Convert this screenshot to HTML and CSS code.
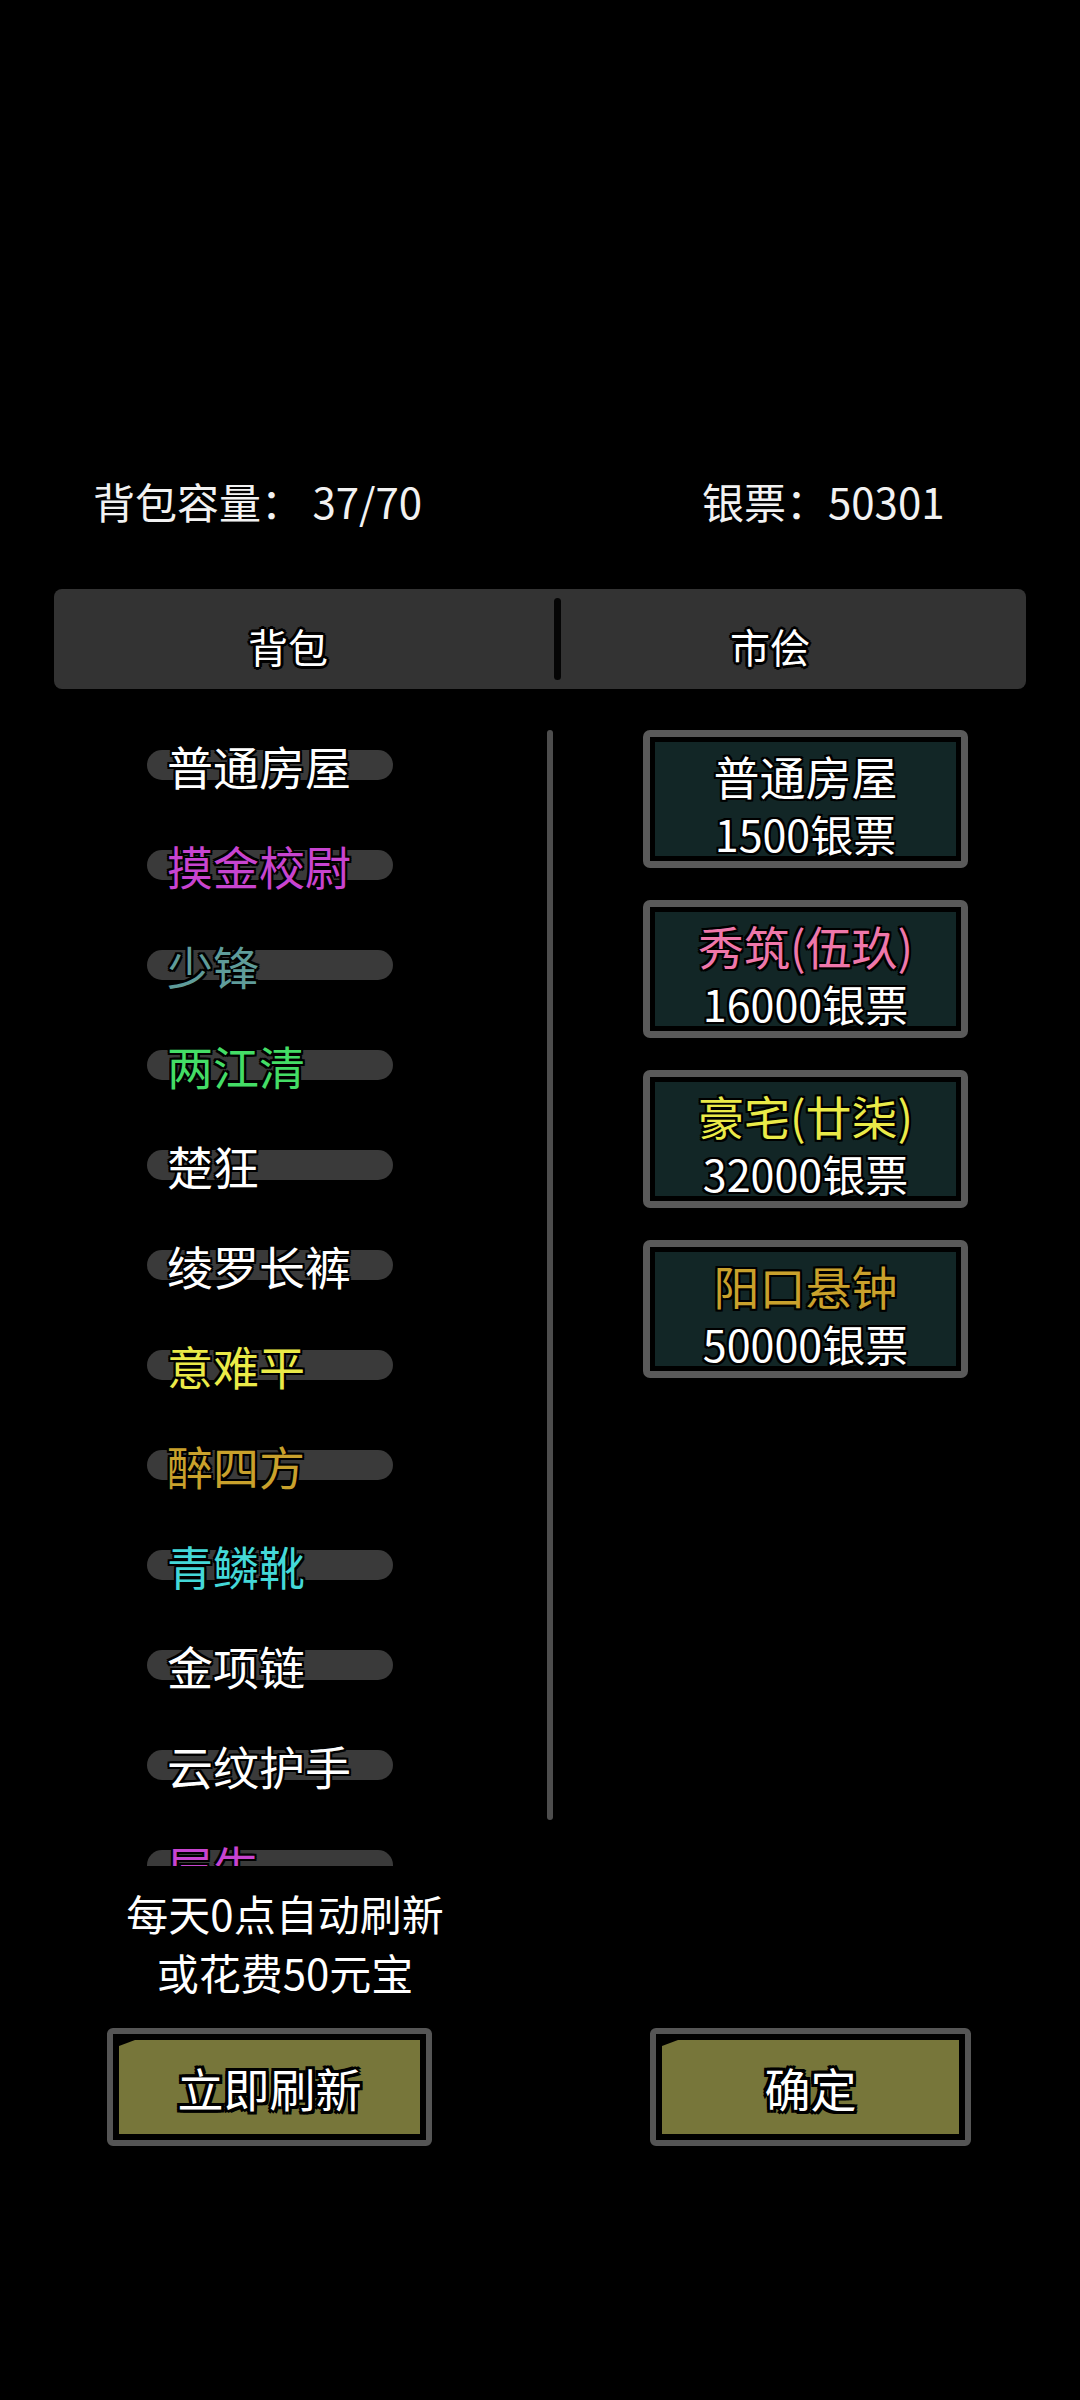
FILE: index.html
```html
<!DOCTYPE html>
<html lang="zh">
<head>
<meta charset="utf-8">
<title>市侩</title>
<link rel="stylesheet" href="styles.css">
</head>
<body>
<div class="screen">
  <div class="stats">
    <span class="stat">背包容量： 37/70</span>
    <span class="stat">银票：50301</span>
  </div>

  <div class="tabs">
    <div class="tab tab-bag">背包</div>
    <div class="tab-divider"></div>
    <div class="tab tab-market">市侩</div>
  </div>

  <div class="main">
    <div class="list">
      <div class="item"><div class="pill"><span class="name c-white">普通房屋</span></div></div>
      <div class="item"><div class="pill"><span class="name c-magenta">摸金校尉</span></div></div>
      <div class="item"><div class="pill"><span class="name c-teal">少锋</span></div></div>
      <div class="item"><div class="pill"><span class="name c-green">两江清</span></div></div>
      <div class="item"><div class="pill"><span class="name c-white">楚狂</span></div></div>
      <div class="item"><div class="pill"><span class="name c-white">绫罗长裤</span></div></div>
      <div class="item"><div class="pill"><span class="name c-yellow">意难平</span></div></div>
      <div class="item"><div class="pill"><span class="name c-gold">醉四方</span></div></div>
      <div class="item"><div class="pill"><span class="name c-cyan">青鳞靴</span></div></div>
      <div class="item"><div class="pill"><span class="name c-white">金项链</span></div></div>
      <div class="item"><div class="pill"><span class="name c-white">云纹护手</span></div></div>
      <div class="item"><div class="pill"><span class="name c-magenta">层生</span></div></div>
    </div>
    <div class="scrollbar"></div>
    <div class="cards">
      <div class="card"><div class="card-inner">
        <div class="card-title c-white">普通房屋</div>
        <div class="card-price">1500银票</div>
      </div></div>
      <div class="card"><div class="card-inner">
        <div class="card-title c-pink">秀筑(伍玖)</div>
        <div class="card-price">16000银票</div>
      </div></div>
      <div class="card"><div class="card-inner">
        <div class="card-title c-yellow">豪宅(廿柒)</div>
        <div class="card-price">32000银票</div>
      </div></div>
      <div class="card"><div class="card-inner">
        <div class="card-title c-gold">阳口悬钟</div>
        <div class="card-price">50000银票</div>
      </div></div>
    </div>
  </div>

  <div class="notice">每天0点自动刷新<br>或花费50元宝</div>

  <div class="actions">
    <div class="btn btn-refresh"><div class="btn-face">立即刷新</div></div>
    <div class="btn btn-ok"><div class="btn-face">确定</div></div>
  </div>
</div>
</body>
</html>
```

FILE: styles.css
```css
html, body {
  margin: 0;
  padding: 0;
  background: #000;
}

body {
  width: 1080px;
  height: 2400px;
  overflow: hidden;
  font-family: "Noto Sans CJK SC", "Noto Sans", sans-serif;
  color: #fff;
}

.screen {
  width: 1080px;
}

/* top stats */
.stats {
  display: grid;
  grid-template-columns: 609px auto;
  padding-top: 477px;
  padding-left: 93px;
  font-size: 42px;
  line-height: 48px;
  color: #f2f2f2;
}

.stat {
  white-space: nowrap;
}

/* tabs */
.tabs {
  display: flex;
  margin-top: 64px;
  margin-left: 54px;
  width: 972px;
  height: 100px;
  background: #333333;
  border-radius: 8px;
}

.tab {
  box-sizing: border-box;
  height: 100px;
  padding-top: 14px;
  line-height: 86px;
  font-size: 40px;
  text-align: center;
  color: #fff;
  text-shadow: -2px -2px 0 #000, 2px -2px 0 #000, -2px 2px 0 #000, 2px 2px 0 #000,
               0 -3px 0 #000, 0 3px 0 #000, -3px 0 0 #000, 3px 0 0 #000;
}

.tab-bag {
  width: 500px;
  padding-right: 32px;
}

.tab-market {
  flex: 1;
  padding-right: 47px;
}

.tab-divider {
  width: 7px;
  height: 82px;
  margin-top: 9px;
  background: #050505;
  border-radius: 4px;
}

/* main */
.main {
  display: flex;
  align-items: flex-start;
  margin-top: 41px;
}

.list {
  margin-left: 147px;
  width: 400px;
  height: 1136px;
  overflow: hidden;
}

.item {
  box-sizing: border-box;
  height: 100px;
  padding-top: 20px;
}

.pill {
  width: 246px;
  height: 30px;
  border-radius: 15px;
  background: #3a3a3a;
}

.name {
  display: block;
  padding-left: 20px;
  font-size: 46px;
  line-height: 30px;
  white-space: nowrap;
  text-shadow: -2px -2px 0 #000, 2px -2px 0 #000, -2px 2px 0 #000, 2px 2px 0 #000,
               0 -2px 0 #000, 0 2px 0 #000, -2px 0 0 #000, 2px 0 0 #000;
}

.scrollbar {
  width: 6px;
  height: 1090px;
  background: #4d4d4d;
  border-radius: 3px;
}

.cards {
  display: flex;
  flex-direction: column;
  gap: 32px;
  margin-left: 90px;
  width: 325px;
}

.card {
  box-sizing: border-box;
  height: 138px;
  border: 7px solid #5a5a5a;
  border-radius: 7px;
  background: #000;
  padding: 5px;
}

.card-inner {
  box-sizing: border-box;
  height: 114px;
  padding-top: 7px;
  background: #122626;
  text-align: center;
  white-space: nowrap;
}

.card-title {
  font-size: 46px;
  line-height: 52px;
  text-shadow: -2px -2px 0 #000, 2px -2px 0 #000, -2px 2px 0 #000, 2px 2px 0 #000,
               0 -2px 0 #000, 0 2px 0 #000, -2px 0 0 #000, 2px 0 0 #000;
}

.card-price {
  margin-top: 11px;
  font-size: 43px;
  line-height: 42px;
  color: #fff;
  text-shadow: -2px -2px 0 #000, 2px -2px 0 #000, -2px 2px 0 #000, 2px 2px 0 #000,
               0 -2px 0 #000, 0 2px 0 #000, -2px 0 0 #000, 2px 0 0 #000;
}

/* colours */
.c-white { color: #ffffff; }
.c-magenta { color: #c844d0; }
.c-teal { color: #5f9c9a; }
.c-green { color: #44dd66; }
.c-yellow { color: #eaea48; }
.c-gold { color: #c9a12c; }
.c-cyan { color: #44d8d8; }
.c-pink { color: #ee77aa; }

/* notice */
.notice {
  margin-top: 17px;
  width: 570px;
  text-align: center;
  font-size: 42px;
  line-height: 59px;
  color: #fff;
  text-shadow: -2px -2px 0 #000, 2px -2px 0 #000, -2px 2px 0 #000, 2px 2px 0 #000;
}

/* buttons */
.actions {
  display: flex;
  margin-top: 27px;
}

.btn {
  box-sizing: border-box;
  height: 118px;
  border: 6px solid #555555;
  border-radius: 6px;
  background: #000;
  padding: 6px;
}

.btn-refresh {
  margin-left: 107px;
  width: 325px;
}

.btn-ok {
  margin-left: 218px;
  width: 321px;
}

.btn-face {
  height: 94px;
  background: #77763a;
  clip-path: polygon(16px 0, 100% 0, 100% 100%, 0 100%, 0 6px);
  text-align: center;
  font-size: 46px;
  line-height: 94px;
  color: #fff;
  text-shadow: -3px -3px 0 #000, 3px -3px 0 #000, -3px 3px 0 #000, 3px 3px 0 #000,
               0 -3px 0 #000, 0 3px 0 #000, -3px 0 0 #000, 3px 0 0 #000;
}
```
